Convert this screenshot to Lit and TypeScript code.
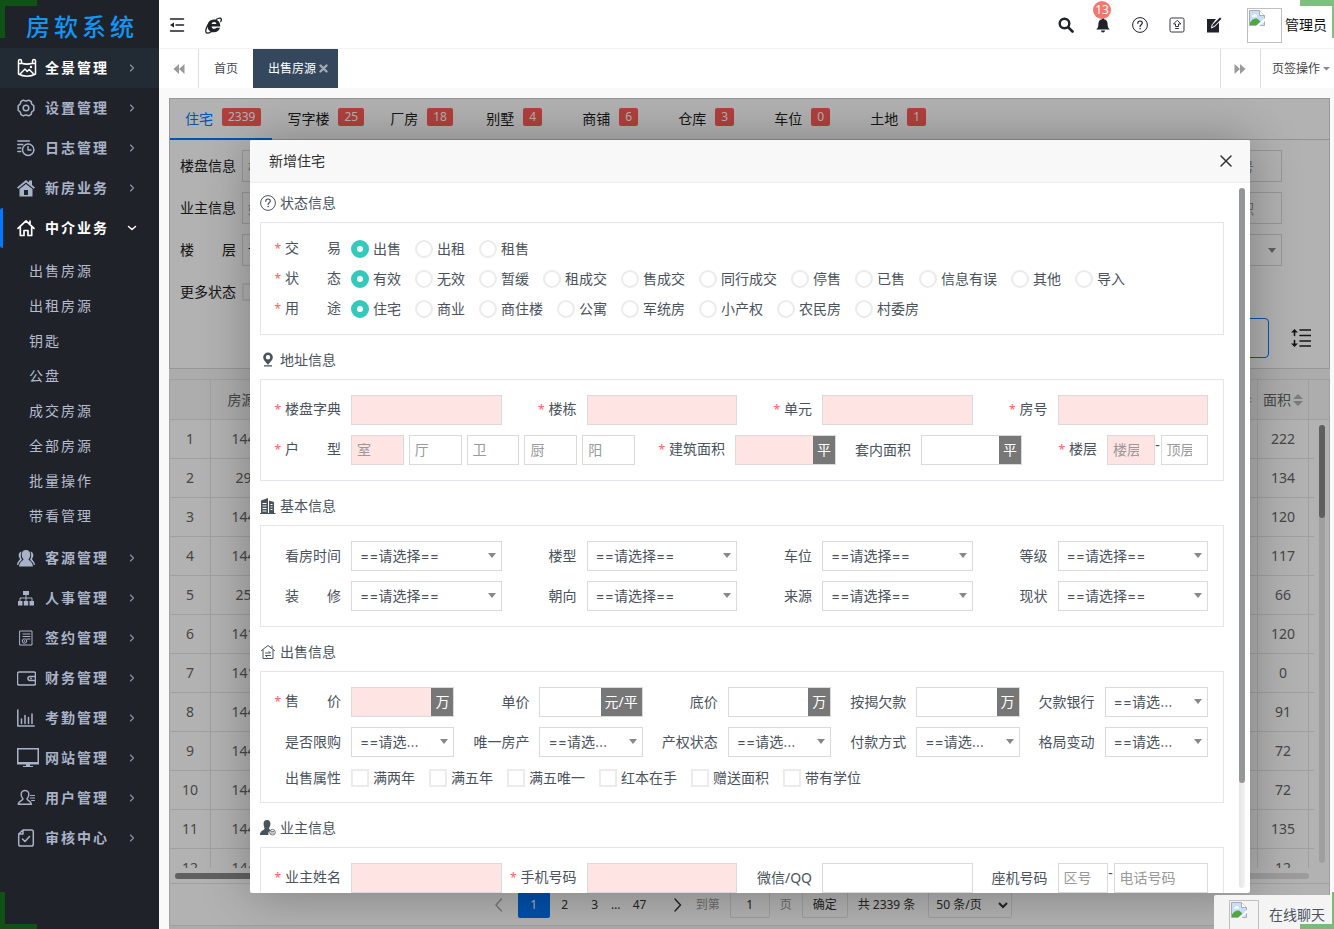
import { LitElement, html, css, svg, nothing, TemplateResult } from "lit";
import { customElement, state } from "lit/decorators.js";
import { classMap } from "lit/directives/class-map.js";

type Glyph = ReturnType<typeof svg>;

const line = (d: string, w = 1.3): Glyph =>
  svg`<path d=${d} fill="none" stroke="currentColor" stroke-width=${w} stroke-linecap="round" stroke-linejoin="round"/>`;
const fill = (d: string): Glyph => svg`<path d=${d} fill="currentColor" fill-rule="evenodd"/>`;

const icon = (g: Glyph | Glyph[], size = 18, box = 18) => html`
  <svg width=${size} height=${size} viewBox="0 0 ${box} ${box}" aria-hidden="true">${g}</svg>`;

const navIcons: Record<string, TemplateResult> = {
  panorama: icon([
    line("M1.500 16V3c0-2 3-2 3 0v2.300c4 1.200 7 1.200 11 0V3c0-2 3-2 3 0v13c-5 3-12 3-17 0z M1.500 5.500h3 M15.500 5.500h3", 1.5),
    line("M3.500 15.500l4.500-4.500 2.200 2.500 2-2 4 4", 1.5),
    svg`<circle cx="14" cy="9" r="1.200" fill="currentColor"/>`,
  ], 20, 20),
  gear: icon([
    line("M6.300 1.200C8 2.200 10 2.200 11.700 1.200l2.500 1.500c0 2 .8 3.200 2.600 3.900v4.800c-1.800.7-2.600 1.900-2.600 3.900l-2.500 1.500c-1.700-1-3.700-1-5.400 0l-2.500-1.500c0-2-.8-3.200-2.600-3.900V6.600C3 5.900 3.800 4.700 3.800 2.700z", 1.5),
    svg`<circle cx="9" cy="9" r="2.800" fill="none" stroke="currentColor" stroke-width="1.500"/>`,
  ]),
  log: icon([
    line("M.8 2h11.500 M.8 5.500h5 M.8 9h3 M.8 12.500h3", 1.4),
    svg`<circle cx="11.200" cy="10.800" r="5.700" fill="none" stroke="currentColor" stroke-width="1.500"/>`,
    line("M11 7.500v3.500h3", 1.4),
  ]),
  house: icon(fill("M0 8.500L9 1l3 2.500V1.500h3V6l3 2.500-1.200 1.300L9 3.500 1.200 9.800z M2.500 10L9 5l6.500 5v7.500H2.500z M7 11v5h4v-5z")),
  home: icon(line("M1 9.300L9 1.800l8 7.500 M3.300 8.500V16.500h3.700v-5h4v5h3.700V8.500 M13 2.200v2.500", 1.7)),
  people: icon(fill("M9 1c3 0 4.500 2 4.300 5-.1 2-1 3.200-1.800 4.200 0 1.600 4 2 4.500 7.300H2c.5-5.300 4.500-5.700 4.500-7.300C5.700 9.200 4.800 8 4.700 6 4.500 3 6 1 9 1z M4.500 2.500C2.500 3 1.500 4.500 1.700 6.700c.1 1.500.8 2.300 1.300 3C3 11 .3 12 0 16h1.200c.5-3 3.300-4.300 3.800-5.300C3.500 8 3.500 5 4.500 2.500z M13.500 2.500c2 .5 3 2 2.800 4.200-.1 1.500-.8 2.300-1.300 3 0 1.300 2.700 2.300 3 6.300h-1.200c-.5-3-3.300-4.300-3.800-5.300C14.500 8 14.500 5 13.500 2.500z")),
  tree: icon([fill("M6 2h6v4H6z M1 12h4.500v4.500H1z M6.800 12h4.400v4.500H6.800z M12.500 12H17v4.500h-4.500z"), line("M9 6v6 M3 12V9h12v3", 1)]),
  contract: icon([line("M3 2h12v14H3z M6 5h7 M6 7.500h7 M10 10h3", 1), svg`<circle cx="7.500" cy="12" r="2.200" fill="none" stroke="currentColor"/>`, svg`<circle cx="7.500" cy="12" r=".8" fill="currentColor"/>`]),
  wallet: icon([line("M2 3h15a1.500 1.500 0 0 1 1.500 1.500v10A1.500 1.500 0 0 1 17 16H2a1.500 1.500 0 0 1-1.500-1.500v-10A1.500 1.500 0 0 1 2 3z M18.500 7.500H13a2 2 0 0 0 0 4h5.500", 1.5), svg`<circle cx="14" cy="9.500" r=".9" fill="currentColor"/>`], 19, 19),
  chart: icon(line("M.8 1v16h16.500 M4.500 14.500V10 M8 14.500V6.500 M11.500 14.500V8.500 M15 14.500V5", 1.5)),
  monitor: icon([fill("M0 1h22v16.500H0z M1.500 2.500v12.500h19V2.500z"), fill("M9 17h4v2h3v1H6v-1h3z")], 22, 22),
  user: icon([line("M8 1.500c3 0 4 2 3.800 4.500C11.600 8 11 8.800 10 9.800c0 2 3.500 1.700 4.500 5.400H1.200C1.800 11.500 6 11.800 6 9.800 5 8.800 4.400 8 4.200 6 4 3.500 5 1.500 8 1.500z", 1.4), line("M13.500 6.500h4 M13.500 9h4 M14.500 11.500h3", 1.1)]),
  audit: icon([line("M6 1h8.500A1.800 1.800 0 0 1 16.300 2.800v12.400A1.800 1.800 0 0 1 14.500 17h-11a1.800 1.800 0 0 1-1.800-1.800V5z M6 1v4H1.700 M5.500 10l2.500 2.500 4.500-5", 1.5)]),
};

const brokenImage = html`
  <svg width="16" height="16" viewBox="0 0 16 16" aria-hidden="true">
    <path d="M.5.500h10l5 5v10H.500z" fill="#c9defa" stroke="#a9abb0"/>
    <path d="M10.500.500v5h5" fill="#fff" stroke="#a9abb0"/>
    <path d="M3 6.500c0-1.500 1-2 1.800-1.800C5.200 3.500 7 3.700 7.200 5c1 0 1.300 1.500.3 1.700H3z" fill="#fff"/>
    <path d="M1 15v-2.500c2-3 4.500-4.500 7-4l3.500 3L8 15z" fill="#4fa83d"/>
    <path d="M7 16l9-8v3l-5.500 5z" fill="#fff"/>
  </svg>`;

const chevron = (open: boolean) => html`<span class="arrow ${open ? "down" : ""}">${icon(line(open ? "M2.500 4.500L6 7.500l3.500-3" : "M4.500 3L7.500 6l-3 3", open ? 1.5 : 1.1), 12, 12)}</span>`;

const sectionIcons: Record<string, TemplateResult> = {
  help: icon([svg`<circle cx="8" cy="8" r="7.400" fill="none" stroke="currentColor"/>`, line("M5.800 6.300c0-3 4.500-3 4.500-.3 0 1.700-2.200 1.700-2.200 3.500", 1.2), svg`<circle cx="8.100" cy="11.600" r=".8" fill="currentColor"/>`], 16, 16),
  pin: icon(fill("M8 .5a4.800 4.800 0 0 1 4.800 4.800C12.800 8.500 9.500 10.500 8 13 6.500 10.500 3.200 8.500 3.200 5.300A4.800 4.800 0 0 1 8 .5z M8 3a2.200 2.200 0 1 0 0 4.400A2.200 2.200 0 0 0 8 3z M4 13.300h8v1.200H4z"), 16, 16),
  building: icon(fill("M1 2.500L8 0v15h1V2.500l5 1.500V15h1.500v1H0v-1h1z M2.500 5v1h4V5z M2.500 7.500v1h4v-1z M2.500 10v1h4v-1z M2.500 12.500v1h4v-1z M10.500 6v1h2V6z M10.500 8.500v1h2v-1z M10.500 11v1h2v-1z"), 16, 16),
  sale: icon(line("M1.500 6.500L8 1.500l6.500 5 M3 6v8.500h10V6 M12 2v2 M5.500 9h5L9 7.500 M10.500 11.500h-5L7 13", 1), 16, 16),
  owner: icon([fill("M7 0c2.600 0 3.600 2 3.400 4.500C10.200 6.500 9 7.500 9 8.500c0 1 1.500 1.300 2 1.700A4 4 0 0 0 8.500 15H0c0-5 4.500-4.500 4.500-6.500C4.500 7.500 3.800 6.500 3.600 4.500 3.400 2 4.400 0 7 0z"), svg`<circle cx="12.500" cy="12.200" r="2.800" fill="none" stroke="currentColor" stroke-width=".8"/>`, line("M11.200 11.500h2.600 M11.200 13h2.600", 0.7)], 16, 16),
};

interface NavItem { icon: string; text: string; lit?: boolean; children?: string[] }

const NAV: NavItem[] = [
  { icon: "panorama", text: "全景管理", lit: true },
  { icon: "gear", text: "设置管理" },
  { icon: "log", text: "日志管理" },
  { icon: "house", text: "新房业务" },
  { icon: "home", text: "中介业务", children: ["出售房源", "出租房源", "钥匙", "公盘", "成交房源", "全部房源", "批量操作", "带看管理"] },
  { icon: "people", text: "客源管理" },
  { icon: "tree", text: "人事管理" },
  { icon: "contract", text: "签约管理" },
  { icon: "wallet", text: "财务管理" },
  { icon: "chart", text: "考勤管理" },
  { icon: "monitor", text: "网站管理" },
  { icon: "user", text: "用户管理" },
  { icon: "audit", text: "审核中心" },
];

const KINDS: [string, number][] = [
  ["住宅", 2339], ["写字楼", 25], ["厂房", 18], ["别墅", 4], ["商铺", 6], ["仓库", 3], ["车位", 0], ["土地", 1],
];

const ROWS: [string, number][] = [
  ["144208", 222], ["29816", 134], ["144195", 120], ["144190", 117], ["25377", 66], ["141862", 120],
  ["141755", 0], ["144023", 91], ["144018", 72], ["144011", 72], ["144006", 135], ["144002", 12],
];

@customElement("app-root")
export class AppRoot extends LitElement {
  @state() private openMenu = "中介业务";
  @state() private dialogOpen = true;

  static styles = css`
    :host {
      display: block;
      height: 100vh;
      overflow: hidden;
      position: relative;
      font: 14px/20px "Noto Sans", "Noto Sans CJK SC", sans-serif;
      color: #333;
      background: #f9f9f9;
    }
    *, *::before, *::after { box-sizing: border-box; }
    svg { display: block; flex: none; }
    a { color: inherit; text-decoration: none; }
    button, input, select { font: inherit; color: inherit; margin: 0; border-radius: 0; outline: none; }
    button { background: none; border: 0; padding: 0; cursor: pointer; }
    ul { list-style: none; margin: 0; padding: 0; }

    .shell { display: grid; grid-template-columns: 159px minmax(0, 1fr); height: 100%; }
    .corner { position: absolute; width: 37px; height: 38px; border: 0 solid rgba(0, 128, 0, .5); pointer-events: none; z-index: 5; }
    .tl { left: 0; top: 0; border-width: 6px 0 0 5px; }
    .tr { right: -3px; top: 0; border-width: 6px 5px 0 0; }
    .bl { left: 0; bottom: -1px; border-width: 0 0 6px 5px; }
    .br { right: -3px; bottom: -1px; border-width: 0 5px 6px 0; }

    /* sidebar */
    .side { background: #20222a; color: #a9b3c7; }
    .logo { height: 48px; padding: 4px 0 0 26px; font-size: 24px; font-weight: 500; line-height: 46px; letter-spacing: 4px; color: #1296f3; }
    .nav-link { display: flex; align-items: center; height: 40px; padding: 0 21px 0 17px; font-weight: 700; letter-spacing: 2px; border-left: 0 solid #007bff; }
    .nav-link.hover { background: #222b33; color: #fff; }
    .nav-link.open { color: #fff; border-left-width: 3px; padding-left: 14px; border-radius: 3px; }
    .nav-icon { width: 28px; }
    .nav-text { flex: 1; }
    .arrow { color: #8f98a8; }
    .arrow.down { color: #fff; }
    .sub { padding: 5px 0; }
    .sub-link { display: block; height: 35px; padding-left: 29px; line-height: 35px; letter-spacing: 2px; color: #b4bccd; }

    /* top bar */
    .main { display: flex; flex-direction: column; min-width: 0; overflow: hidden; }
    .top { display: flex; align-items: center; height: 49px; background: #fff; border-bottom: 1px solid #f2f2f2; color: #20222a; flex: none; padding: 2px 7px 0 10px; }
    .tool { display: grid; place-items: center; width: 37px; height: 46px; position: relative; }
    .tool.left { width: 36px; justify-items: start; }
    .push { margin-left: auto; }
    .count { position: absolute; top: -1px; left: 9px; width: 18px; height: 18px; border-radius: 9px; background: #f5766e; color: #fff; font-size: 12px; line-height: 18px; text-align: center; }
    .avatar { width: 35px; height: 35px; border: 1px solid #c0c0c0; padding: 1px; margin: 0 3px 0 15px; }
    .user { color: #111; }

    .tabs { display: flex; height: 39px; background: #fff; font-size: 12px; line-height: 39px; color: #444b54; flex: none; }
    .tab-btn { display: grid; place-items: center; width: 40px; border: 0 solid #ddd; color: #999; }
    .tab-btn.prev { border-right-width: 1px; }
    .tab-btn.next { border-width: 0 1px; width: 41px; margin-left: auto; }
    .tab { padding: 0 15px; }
    .tab.on { display: flex; align-items: center; gap: 3px; padding: 0 10px 0 15px; background: #34475d; color: #fff; }
    .tab-x { color: #a3abb5; }
    .tab-ops { display: flex; align-items: center; gap: 3px; padding: 0 4px 0 11px; color: #444; }
    .tab-ops svg { color: #888; }

    /* work frame */
    .frame { position: relative; flex: none; display: flex; flex-direction: column; height: calc(100vh - 92px); margin: 10px 4px 0 10px; overflow: hidden; background: #f7f7f7; color: #333; }
    .panel { background: #fff; border: 1px solid #d9d9d9; flex: none; color: #222; }
    .kinds { display: flex; height: 41px; box-shadow: inset 0 -1px #d0d0d0; }
    .kind { display: flex; align-items: center; gap: 9px; min-width: 96px; height: 41px; padding: 0 11px 0 15px; border-bottom: 2px solid transparent; }
    .kind.on { color: #007bff; border-color: #007bff; }
    .badge { height: 18px; margin-bottom: 4px; padding: 0 6px; border-radius: 2px; background: #ff5c57; color: #fff; font-size: 12px; line-height: 18px; }
    .filters { display: flex; flex-direction: column; gap: 10px; padding: 10px 0; }
    .filter-row { display: flex; justify-content: space-between; padding: 0 47px 0 10px; }
    .filter { display: flex; align-items: center; gap: 6px; height: 32px; }
    .filter .text { height: 32px; width: 108px; padding: 0 9px; }
    .filter .text.lead { padding: 0 5px; }
    .filter-actions { display: flex; align-items: center; justify-content: flex-end; gap: 22px; padding-right: 18px; }
    .reset { width: 80px; height: 40px; border: 1px solid #007bff; border-radius: 4px; color: #007bff; }

    .list { display: flex; flex-direction: column; flex: 1; min-height: 0; margin: 10px 0 9px; background: #fff; border: 1px solid #e6e6e6; color: #666; }
    .list-body { display: grid; grid-template-columns: minmax(0, 1fr) 15px; flex: 1; min-height: 0; overflow: hidden; }
    .list-body > div { min-height: 0; overflow: hidden; }
    table { width: 100%; border-collapse: separate; border-spacing: 0; table-layout: fixed; }
    th, td { height: 39px; padding: 0; text-align: center; font-weight: 400; border: 0 solid #e6e6e6; border-width: 0 1px 1px 0; white-space: nowrap; }
    th:last-child, td:last-child { border-right-width: 0; }
    th { height: 40px; background: #f8f8f8; }
    .c-no { width: 41px; } .c-id { width: 90px; } .c-num { width: 51px; } .c-end { width: 5px; }
    .sortable { display: flex; align-items: center; justify-content: center; gap: 2px; }
    .sort { color: #b2b2b2; }
    .vbar { display: flex; flex-direction: column; align-items: center; }
    .vbar-head { width: 100%; height: 40px; background: #f8f8f8; border-bottom: 1px solid #e6e6e6; flex: none; }
    .vtrack { flex: 1; width: 6px; margin: 5px 0; border-radius: 3px; background: #e4e4e4; }
    .vthumb { height: 93px; border-radius: 3px; background: #888; }
    .htrack { height: 6px; margin: 5px 20px 4px 5px; border-radius: 3px; background: #e0e0e0; flex: none; }
    .hthumb { width: 62%; height: 6px; border-radius: 3px; background: #8a8a8a; }
    .pager { display: flex; justify-content: center; align-items: center; height: 42px; padding-right: 7px; border-top: 1px solid #e6e6e6; font-size: 12px; flex: none; color: #333; }
    .page { display: grid; place-items: center; width: 30px; height: 26px; }
    .page.on { width: 32px; background: #0073f5; color: #fff; border-radius: 2px; }
    .page.gap { width: 12px; } .page.last { width: 36px; } .page.nav { width: 38px; } .page.off { color: #aaa; }
    .jump { display: flex; align-items: center; gap: 10px; color: #999; }
    .pager-box { height: 26px; border: 1px solid #e2e2e2; border-radius: 2px; background: none; color: #333; text-align: center; }
    .jump-no { width: 40px; } .jump-go { width: 46px; }
    .total { margin: 0 13px 0 10px; }
    .per { width: 84px; text-align: left; padding: 0 3px; }

    /* dialog */
    .shade { position: absolute; inset: 0; display: grid; place-items: center; padding-left: 1px; background: rgba(0, 0, 0, .3); }
    .dialog { display: flex; flex-direction: column; width: 1000px; max-width: 96%; height: 90%; background: #fff; border-radius: 2px; box-shadow: 1px 1px 50px rgba(0, 0, 0, .3); overflow: hidden; color: #4a525c; }
    .dialog-head { display: flex; align-items: center; justify-content: space-between; height: 43px; padding: 0 18px 0 19px; background: #f8f8f8; border-bottom: 1px solid #eee; color: #333; flex: none; }
    .dialog-title { margin: 0; font-size: 14px; line-height: 20px; font-weight: 400; }
    .dialog-main { display: grid; grid-template-columns: minmax(0, 1fr) 6px; gap: 15px; flex: 1; min-height: 0; padding: 0 5px 0 10px; }
    .dialog-body { min-height: 0; overflow: hidden; padding-top: 1px; }
    .dtrack { margin: 5px 0; border-radius: 3px; background: linear-gradient(90deg, #e4e4e4, #f2f2f2); }
    .dthumb { height: 85%; border-radius: 3px; background: #949697; }
    .head { display: flex; align-items: center; gap: 4px; height: 38px; margin: 6px 0 0; font-size: 14px; font-weight: 400; }
    .head:first-child { margin-top: 0; }
    .box { display: grid; gap: 10px; padding: 15px 15px 15px 5px; border: 1px solid #e4e5ef; }
    .box.choices { gap: 0; padding: 11px 15px 10px 5px; }
    .box.tight { padding-bottom: 13px; }
    .row { display: grid; }
    .c4 { grid-template-columns: repeat(4, minmax(0, 1fr)); }
    .c5 { grid-template-columns: repeat(5, minmax(0, 1fr)); }
    .mixed { grid-template-columns: 384fr 186fr 186fr 186fr; }
    .field { display: flex; align-items: center; height: 30px; min-width: 0; }
    .field.short { height: 22px; }
    .name { width: 85px; padding-right: 10px; text-align: right; white-space: nowrap; flex: none; }
    .star { color: #ff5c5c; margin-right: 4px; font-size: 12px; }
    .ctl { display: flex; flex: 1; min-width: 0; }
    .ctl.rooms { gap: 5px; padding-right: 15px; }
    .text { flex: 1; width: 0; min-width: 0; height: 30px; padding: 0 15px 0 5px; border: 1px solid #d9dadc; background: #fff; }
    .text.need { background: #ffe4e4; }
    .text::placeholder { color: #999; opacity: 1; }
    .area { flex: none; width: 50px; }
    .dash { width: 6px; text-align: center; }
    .united { border: 1px solid #d9dadc; height: 30px; background: #fff; }
    .united .text { height: 28px; border: 0; }
    .unit { padding: 0 4px; background: #777; color: #fff; line-height: 28px; height: 28px; }
    .pick { position: relative; display: flex; flex: 1; min-width: 0; }
    .pick::after { content: ""; position: absolute; right: 6px; top: 12px; border: 4px solid transparent; border-top: 5px solid #888; border-bottom: 0; pointer-events: none; }
    .select { appearance: none; flex: 1; width: 0; min-width: 0; height: 30px; padding: 0 24px 0 8px; border: 1px solid #d9dadc; background: #fff; text-overflow: ellipsis; overflow: hidden; white-space: nowrap; font-family: "Inter", "Noto Sans CJK SC", sans-serif; }
    .filter .pick { flex: none; }
    .filter .select { width: 108px; height: 32px; padding-left: 5px; flex: none; }
    .filter .pick::after { top: 14px; }
    .opts { display: flex; gap: 14px; }
    .opt { display: flex; align-items: center; gap: 4px; white-space: nowrap; }
    .mark { appearance: none; width: 18px; height: 18px; border: 2px solid #ebebeb; background: #fff; flex: none; }
    .mark.round { border-radius: 9px; }
    .mark.round:checked { border: 6px solid #33cabb; }
    .mark.square:checked { background: #33cabb; }

    .chat { position: absolute; right: 0; bottom: 0; display: flex; gap: 10px; width: 120px; height: 34px; padding: 5px 9px 0 15px; background: #f4f4f4; overflow: hidden; color: #4a525c; line-height: 30px; border-radius: 2px 0 0 0; }
    .chat-pic { width: 30px; height: 30px; border: 1px solid #c0c0c0; padding: 1px; flex: none; }
  `;

  private star(need: boolean) {
    return need ? html`<span class="star">*</span>` : nothing;
  }

  private text(id: string, need = false, hint = "", cls = "") {
    return html`<input id=${id} type="text" placeholder=${hint} aria-label=${hint || nothing}
      class="text ${need ? "need" : ""} ${cls}">`;
  }

  private field(label: string, need: boolean, id: string, control: unknown, cls = "") {
    return html`<div class="field">
      <label class="name" for=${id}>${this.star(need)}${label}</label>
      <div class="ctl ${cls}">${control}</div>
    </div>`;
  }

  private input(label: string, id: string, need = false) {
    return this.field(label, need, id, this.text(id, need));
  }

  private united(label: string, id: string, unit: string, need = false) {
    return this.field(label, need, id, html`${this.text(id, need)}<span class="unit">${unit}</span>`, "united");
  }

  private select(label: string, id: string) {
    return this.field(label, false, id, html`<span class="pick"><select id=${id} class="select"><option>==请选择==</option></select></span>`);
  }

  private radios(label: string, name: string, options: string[]) {
    return html`<div class="field" role="radiogroup" aria-label=${label.replace(/\s/g, "")}>
      <span class="name">${this.star(true)}${label}</span>
      <div class="opts">${options.map((o, i) => html`<label class="opt"><input class="mark round" type="radio" name=${name} ?checked=${i === 0}>${o}</label>`)}</div>
    </div>`;
  }

  private heading(key: string, text: string) {
    return html`<h3 class="head">${sectionIcons[key]}<span>${text}</span></h3>`;
  }

  private renderSide() {
    return html`<nav class="side">
      <div class="logo">房软系统</div>
      <ul>${NAV.map((n) => {
        const open = !!n.children && this.openMenu === n.text;
        return html`<li>
          <a href="#" class="nav-link ${classMap({ hover: !!n.lit, open })}"
            @click=${(e: Event) => { e.preventDefault(); this.openMenu = open ? "" : n.text; }}>
            <span class="nav-icon">${navIcons[n.icon]}</span><span class="nav-text">${n.text}</span>${chevron(open)}
          </a>
          ${open ? html`<ul class="sub">${n.children!.map((c) => html`<li><a class="sub-link" href="#">${c}</a></li>`)}</ul>` : nothing}
        </li>`;
      })}</ul>
    </nav>`;
  }

  private renderTop() {
    return html`<header class="top">
      <button class="tool left" aria-label="收起菜单">${icon([line("M1.500 2h13 M7 8h7.500 M1.500 14h13", 1.5), fill("M1 8l4-2.500v5z")], 16, 16)}</button>
      <button class="tool left" aria-label="浏览器">${icon([
        fill("M9 2.500c3.900 0 6.300 2.700 6.300 6.900H6.600c.1 1.500 1.200 2.400 2.700 2.400 1 0 1.800-.4 2.300-1.100h3.400c-.8 2.800-3 4.600-6 4.600-3.900 0-6.500-2.600-6.500-6.400 0-3.600 2.700-6.400 6.500-6.400z M6.700 7h4.700c-.1-1.200-1-2-2.300-2s-2.300.8-2.400 2z"),
        line("M11.500 2.300C14 .8 16 .6 16.300 2c.2.800-.1 1.700-.5 2.600 M6 4.500C2.500 7.500-.3 13.500 1.200 15.500c.9 1.100 3 .5 5-.8", 1.3),
      ], 17, 17)}</button>
      <button class="tool push" aria-label="搜索">${icon([svg`<circle cx="6.500" cy="6.500" r="4.800" fill="none" stroke="currentColor" stroke-width="2.400"/>`, line("M10.300 10.300l4.200 4.200", 2.6)], 16, 16)}</button>
      <button class="tool" aria-label="消息">${icon(fill("M8 .8a1 1 0 0 1 1 1v.5c2.400.5 3.600 2.200 3.600 4.700 0 3 .8 4.200 2.200 5.500H1.200C2.600 11.200 3.400 10 3.400 7c0-2.500 1.200-4.200 3.600-4.700v-.5a1 1 0 0 1 1-1z M6 13.400h4a2 2 0 0 1-4 0z"), 16, 16)}<span class="count">13</span></button>
      <button class="tool" aria-label="帮助">${sectionIcons.help}</button>
      <button class="tool" aria-label="上传">${icon([svg`<rect x="1" y="1" width="14" height="14" rx="1.500" fill="none" stroke="currentColor" stroke-width=".9"/>`, line("M8 3.500L4.500 7H6.500v2.500h3V7h2z M6.500 11.500h3", 0.9)], 16, 16)}</button>
      <button class="tool" aria-label="编辑">${icon(fill("M1 2h9L5.500 8 5 11.500 8.500 10 13 5.500V15.500H1z M14 .5l1.500 1.300L8.300 9 6 10l.8-2.500z"), 16, 16)}</button>
      <span class="avatar">${brokenImage}</span><span class="user">管理员</span>
    </header>
    <div class="tabs">
      <button class="tab-btn prev" aria-label="上一页签">${icon(fill("M6 1v10L.5 6z M11.500 1v10L6 6z"), 12, 12)}</button>
      <a class="tab" href="#">首页</a>
      <a class="tab on" href="#"><span>出售房源</span><svg class="tab-x" width="9" height="9" viewBox="0 0 9 9">${line("M1.500 1.500l6 6 M7.500 1.500l-6 6", 2.4)}</svg></a>
      <button class="tab-btn next" aria-label="下一页签">${icon(fill("M.5 1v10L6 6z M6 1v10l5.500-5z"), 12, 12)}</button>
      <button class="tab-ops">页签操作${icon(fill("M0 2h7L3.500 5.500z"), 7, 7)}</button>
    </div>`;
  }

  private filterInput(id: string, label: string, hint: string, lead = false) {
    return html`<div class="filter"><label for=${id}>${label}</label><input id=${id} class="text ${lead ? "lead" : ""}" placeholder=${hint}></div>`;
  }

  private filterSelect(id: string, label: string) {
    return html`<div class="filter"><label for=${id}>${label}</label><span class="pick"><select id=${id} class="select"><option>请选择</option></select></span></div>`;
  }

  private sortHead(text: string) {
    return html`<span class="sortable">${text}<svg class="sort" width="10" height="12" viewBox="0 0 10 12">${fill("M0 5l5-5 5 5z M0 7h10l-5 5z")}</svg></span>`;
  }

  private renderWork() {
    return html`
      <section class="panel">
        <div class="kinds">${KINDS.map(([k, n], i) => html`<a href="#" class="kind ${i === 0 ? "on" : ""}"><span>${k}</span><span class="badge">${n}</span></a>`)}</div>
        <div class="filters">
          <div class="filter-row">${this.filterInput("f1", "楼盘信息", "楼盘名称", true)}${this.filterInput("f2", "房间信息", "请输入房号")}</div>
          <div class="filter-row">${this.filterInput("f3", "业主信息", "姓名电话", true)}${this.filterInput("f4", "面积信息", "请输入面积")}</div>
          <div class="filter-row">${this.filterSelect("f5", "楼　　层")}${this.filterSelect("f6", "房屋等级")}</div>
          <div class="filter-row"><div class="filter"><span>更多状态</span><label class="opt"><input class="mark square" type="checkbox">有钥匙</label></div></div>
          <div class="filter-actions"><button class="reset">重置</button>
            <button aria-label="排序">${icon([line("M9 2h11 M9 7.500h11 M9 13h11 M9 18h11", 1.6), line("M3.500 2.500v5 M3.500 12.500v5", 1.6), fill("M0 4.500L3.500 1 7 4.500z M0 15.500L3.500 19 7 15.500z")], 20, 20)}</button>
          </div>
        </div>
      </section>
      <section class="list">
        <div class="list-body">
          <div><table>
            <thead><tr><th class="c-no"></th><th class="c-id">房源编号</th><th>楼盘</th><th>户型</th><th>楼层</th><th>售价</th><th class="c-num">${this.sortHead("单价")}</th><th class="c-num">${this.sortHead("面积")}</th><th class="c-end"></th></tr></thead>
            <tbody>${ROWS.map(([id, area], i) => html`<tr><td>${i + 1}</td><td>${id}</td><td></td><td></td><td></td><td></td><td></td><td>${area}</td><td></td></tr>`)}</tbody>
          </table></div>
          <div class="vbar"><div class="vbar-head"></div><div class="vtrack"><div class="vthumb"></div></div></div>
        </div>
        <div class="htrack"><div class="hthumb"></div></div>
        <div class="pager">
          <button class="page nav off" aria-label="上一页">${icon(line("M9.500 1L4 7l5.500 6", 1.4), 14, 14)}</button>
          <button class="page on">1</button><button class="page">2</button><button class="page">3</button>
          <span class="page gap">…</span><button class="page last">47</button>
          <button class="page nav" aria-label="下一页">${icon(line("M5 1l5.500 6L5 13", 1.4), 14, 14)}</button>
          <div class="jump"><label for="jump">到第</label><input id="jump" class="pager-box jump-no" .value=${"1"}><span>页</span><button class="pager-box jump-go">确定</button></div>
          <span class="total">共 2339 条</span>
          <select class="pager-box per" aria-label="每页条数"><option>50 条/页</option></select>
        </div>
      </section>`;
  }

  private renderDialog() {
    return html`<div class="shade"><div class="dialog" role="dialog" aria-label="新增住宅">
      <div class="dialog-head"><h2 class="dialog-title">新增住宅</h2>
        <button aria-label="关闭" @click=${() => (this.dialogOpen = false)}>${icon(line("M1 1l10 10 M11 1L1 11", 1.5), 12, 12)}</button></div>
      <div class="dialog-main">
        <form class="dialog-body">
          ${this.heading("help", "状态信息")}
          <div class="box choices">
            ${this.radios("交　　易", "deal", ["出售", "出租", "租售"])}
            ${this.radios("状　　态", "status", ["有效", "无效", "暂缓", "租成交", "售成交", "同行成交", "停售", "已售", "信息有误", "其他", "导入"])}
            ${this.radios("用　　途", "use", ["住宅", "商业", "商住楼", "公寓", "军统房", "小产权", "农民房", "村委房"])}
          </div>
          ${this.heading("pin", "地址信息")}
          <div class="box">
            <div class="row c4">${this.input("楼盘字典", "estate", true)}${this.input("楼栋", "block", true)}${this.input("单元", "cell", true)}${this.input("房号", "room", true)}</div>
            <div class="row mixed">
              ${this.field("户　　型", true, "r1", html`${this.text("r1", true, "室")}${this.text("r2", false, "厅")}${this.text("r3", false, "卫")}${this.text("r4", false, "厨")}${this.text("r5", false, "阳")}`, "rooms")}
              ${this.united("建筑面积", "gross", "平", true)}${this.united("套内面积", "net", "平")}
              ${this.field("楼层", true, "floor", html`${this.text("floor", true, "楼层")}<span class="dash">-</span>${this.text("top", false, "顶层")}`)}
            </div>
          </div>
          ${this.heading("building", "基本信息")}
          <div class="box">
            <div class="row c4">${["看房时间", "楼型", "车位", "等级"].map((l, i) => this.select(l, `a${i}`))}</div>
            <div class="row c4">${["装　　修", "朝向", "来源", "现状"].map((l, i) => this.select(l, `b${i}`))}</div>
          </div>
          ${this.heading("sale", "出售信息")}
          <div class="box tight">
            <div class="row c5">${this.united("售　　价", "price", "万", true)}${this.united("单价", "unit", "元/平")}${this.united("底价", "low", "万")}${this.united("按揭欠款", "debt", "万")}${this.select("欠款银行", "bank")}</div>
            <div class="row c5">${["是否限购", "唯一房产", "产权状态", "付款方式", "格局变动"].map((l, i) => this.select(l, `c${i}`))}</div>
            <div class="field short" role="group" aria-label="出售属性"><span class="name">出售属性</span>
              <div class="opts">${["满两年", "满五年", "满五唯一", "红本在手", "赠送面积", "带有学位"].map((o) => html`<label class="opt"><input class="mark square" type="checkbox">${o}</label>`)}</div></div>
          </div>
          ${this.heading("owner", "业主信息")}
          <div class="box">
            <div class="row c4">${this.input("业主姓名", "owner", true)}${this.input("手机号码", "mobile", true)}${this.input("微信/QQ", "qq")}
              ${this.field("座机号码", false, "zone", html`${this.text("zone", false, "区号", "area")}<span class="dash">-</span>${this.text("tel", false, "电话号码")}`)}</div>
          </div>
        </form>
        <div class="dtrack"><div class="dthumb"></div></div>
      </div>
    </div></div>`;
  }

  render() {
    return html`
      <div class="shell">
        ${this.renderSide()}
        <div class="main">
          ${this.renderTop()}
          <div class="frame">${this.renderWork()}${this.dialogOpen ? this.renderDialog() : nothing}</div>
        </div>
      </div>
      <div class="chat"><span class="chat-pic">${brokenImage}</span><span>在线聊天</span></div>
      <i class="corner tl"></i><i class="corner tr"></i><i class="corner bl"></i><i class="corner br"></i>`;
  }
}
